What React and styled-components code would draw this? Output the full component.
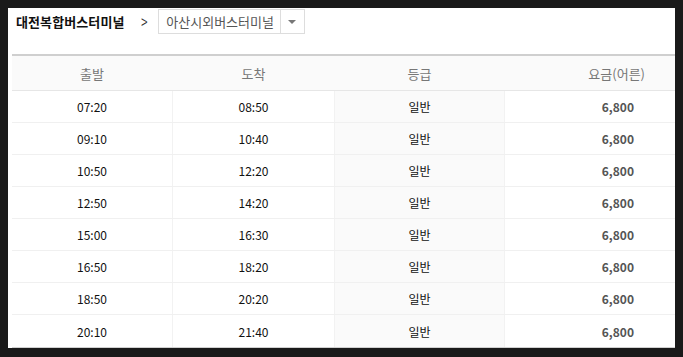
import React from "react";
import styled, { createGlobalStyle } from "styled-components";

const Global = createGlobalStyle`
  html, body { background: #1a1a1a; }
  body {
    margin: 8px;
    font-family: "Noto Sans CJK KR", "Noto Sans", sans-serif;
  }
  * { box-sizing: border-box; }
`;

const Panel = styled.div`
  width: 667px;
  height: 340px;
  background: #fff;
  padding-left: 4px;
`;

const TopBar = styled.div`
  display: flex;
  align-items: center;
  height: 46px;
  padding: 1px 0 20px 4px;
`;

const Title = styled.span`
  font-size: 13px;
  font-weight: 700;
  color: #111;
  letter-spacing: 0.1px;
`;

const Chevron = styled.span`
  margin: 0 10px 0 15px;
  font-size: 15px;
  line-height: 1;
  color: #333;
  font-family: "Liberation Sans", sans-serif;
  transform: scaleX(0.75);
`;

const Select = styled.div`
  display: flex;
  height: 25px;
  border: 1px solid #ddd;
  background: #fff;
`;

const SelectText = styled.span`
  display: flex;
  align-items: center;
  padding: 0 6px 0 7px;
  font-size: 13px;
  color: #555;
  border-right: 1px solid #ddd;
`;

const Caret = styled.span`
  display: flex;
  align-items: center;
  justify-content: center;
  width: 23px;
  &::after {
    content: "";
    border-left: 4px solid transparent;
    border-right: 4px solid transparent;
    border-top: 4px solid #777;
  }
`;

const Table = styled.div`
  border-top: 2px solid #cfcfcf;
  border-bottom: 1px solid #d0d0d0;
`;

const Row = styled.div`
  display: grid;
  grid-template-columns: 161px 162px 170px 170px;
  height: ${(p) => (p.$head ? "35px" : "32px")};
  border-bottom: 1px solid ${(p) => (p.$head ? "#e6e6e6" : "#f0f0f0")};
  background: ${(p) => (p.$head ? "#fafafa" : "#fff")};
  &:last-child { border-bottom: none; }
`;

const Cell = styled.div`
  display: flex;
  align-items: center;
  justify-content: ${(p) => (p.$right ? "flex-end" : "center")};
  padding-right: ${(p) => (p.$right ? (p.$head ? "29px" : "40px") : "0")};
  font-size: ${(p) => (p.$head ? "13px" : "12px")};
  color: ${(p) => (p.$head ? "#777" : p.$fare ? "#555" : "#111")};
  font-weight: ${(p) => (p.$fare ? 700 : 400)};
  background: ${(p) => (p.$shade ? "#fafafa" : "transparent")};
  border-right: 1px solid ${(p) => (p.$head || p.$last ? "transparent" : "#f2f2f2")};
`;

const rows = [
  ["07:20", "08:50"],
  ["09:10", "10:40"],
  ["10:50", "12:20"],
  ["12:50", "14:20"],
  ["15:00", "16:30"],
  ["16:50", "18:20"],
  ["18:50", "20:20"],
  ["20:10", "21:40"],
];

export default function App() {
  return (
    <>
      <Global />
      <Panel>
        <TopBar>
          <Title>대전복합버스터미널</Title>
          <Chevron>&gt;</Chevron>
          <Select>
            <SelectText>아산시외버스터미널</SelectText>
            <Caret />
          </Select>
        </TopBar>
        <Table>
          <Row $head>
            <Cell $head>출발</Cell>
            <Cell $head>도착</Cell>
            <Cell $head>등급</Cell>
            <Cell $head $right $last>요금(어른)</Cell>
          </Row>
          {rows.map(([d, a]) => (
            <Row key={d}>
              <Cell>{d}</Cell>
              <Cell>{a}</Cell>
              <Cell $shade>일반</Cell>
              <Cell $right $fare $last>6,800</Cell>
            </Row>
          ))}
        </Table>
      </Panel>
    </>
  );
}
